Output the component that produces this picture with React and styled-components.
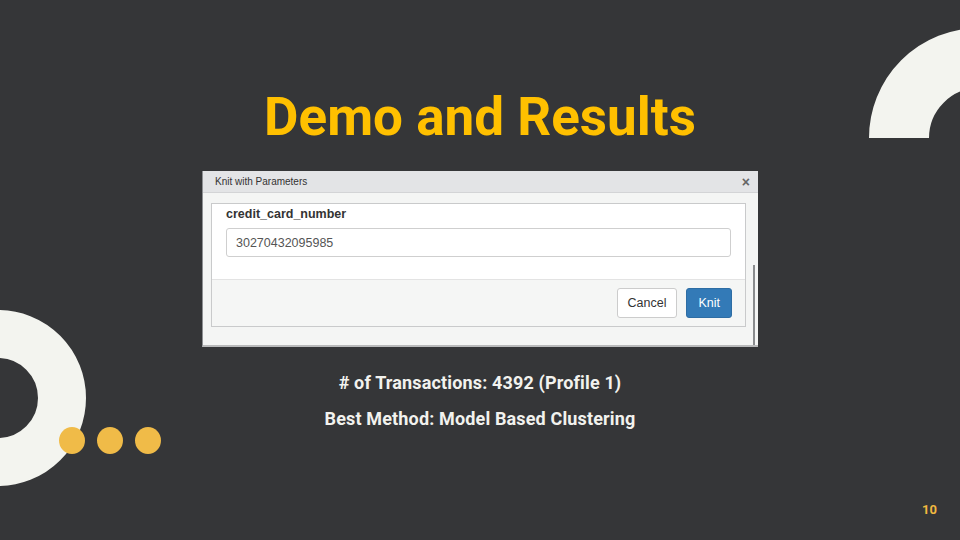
import React from 'react';
import styled, { createGlobalStyle } from 'styled-components';

const GlobalStyle = createGlobalStyle`
  html, body {
    margin: 0;
    padding: 0;
    background: #353638;
  }
  * { box-sizing: border-box; }
`;

const Slide = styled.div`
  position: relative;
  width: 960px;
  height: 540px;
  overflow: hidden;
  background: #353638;
  display: flex;
  flex-direction: column;
  align-items: center;
  font-family: 'Roboto', 'Liberation Sans', sans-serif;
`;

const Title = styled.h1`
  margin: 82px 0 0;
  font-family: 'Roboto', sans-serif;
  font-weight: 700;
  font-size: 53px;
  line-height: 70px;
  color: #ffc000;
`;

const Ring = styled.div`
  position: absolute;
  border-radius: 50%;
  border: ${p => p.$thick}px solid #f3f4ef;
  width: ${p => p.$size}px;
  height: ${p => p.$size}px;
  left: ${p => p.$x}px;
  top: ${p => p.$y}px;
`;

// keeps only the upper half of the top-right ring
const ArcClip = styled.div`
  position: absolute;
  left: 860px;
  top: 0;
  width: 100px;
  height: 138px;
  overflow: hidden;
`;

const Dots = styled.div`
  position: absolute;
  left: 59px;
  top: 427px;
  display: flex;
  gap: 12px;
`;

const Dot = styled.span`
  width: 26px;
  height: 27px;
  border-radius: 50%;
  background: #f0bb48;
`;

const Shot = styled.div`
  position: relative;
  margin-top: 19px;
  width: 556px;
  height: 176px;
  background: #f4f5f4;
  border-left: 1px solid #8d8f92;
  border-bottom: 2px solid #b9babb;
  font-family: 'Liberation Sans', Arial, sans-serif;
`;

const ShotHeader = styled.div`
  height: 22px;
  background: #e3e4e6;
  border-bottom: 1px solid #d3d4d6;
  display: flex;
  align-items: center;
  justify-content: space-between;
  padding: 0 8px 0 12px;
  font-size: 10px;
  color: #333;
`;

const Close = styled.span`
  font-size: 14px;
  color: #666;
  font-weight: 700;
`;

const Panel = styled.div`
  margin: 10px 0 0 8px;
  width: 535px;
  border: 1px solid #c9cacb;
  background: #ffffff;
`;

const PanelBody = styled.div`
  padding: 3px 14px 22px 14px;
`;

const Label = styled.div`
  font-weight: 700;
  font-size: 12.5px;
  color: #333;
  margin-bottom: 7px;
`;

const Input = styled.div`
  height: 29px;
  border: 1px solid #cfcfcf;
  border-radius: 3px;
  padding: 0 9px;
  display: flex;
  align-items: center;
  font-size: 12.5px;
  color: #555;
`;

const PanelFooter = styled.div`
  border-top: 1px solid #e3e3e3;
  background: #f5f6f5;
  padding: 8px 13px 8px;
  display: flex;
  justify-content: flex-end;
  gap: 9px;
`;

const Button = styled.div`
  height: 30px;
  padding: 0 ${p => (p.$primary ? 11 : 10)}px;
  border-radius: 3px;
  display: flex;
  align-items: center;
  font-size: 12.5px;
  color: ${p => (p.$primary ? '#fff' : '#333')};
  background: ${p => (p.$primary ? '#337ab7' : '#fff')};
  border: 1px solid ${p => (p.$primary ? '#2e6da4' : '#cccccc')};
`;

const ScrollEdge = styled.div`
  position: absolute;
  right: 3px;
  top: 94px;
  width: 2px;
  height: 80px;
  background: #8a8c8e;
`;

const Facts = styled.div`
  margin-top: 24px;
  display: flex;
  flex-direction: column;
  align-items: center;
  gap: 12px;
`;

const Fact = styled.p`
  margin: 0;
  font-family: 'Roboto', sans-serif;
  font-weight: 700;
  font-size: 18px;
  line-height: 24px;
  letter-spacing: 0.15px;
  color: #f2f2ee;
`;

const PageNumber = styled.div`
  position: absolute;
  right: 23px;
  bottom: 23px;
  font-family: 'Roboto', sans-serif;
  font-weight: 700;
  font-size: 13px;
  color: #f0b840;
`;

export default function App() {
  return (
    <>
      <GlobalStyle />
      <Slide>
        <ArcClip>
          <Ring $size={220} $thick={60} $x={9} $y={28} />
        </ArcClip>
        <Ring $size={176} $thick={48} $x={-90} $y={310} />
        <Dots>
          <Dot />
          <Dot />
          <Dot />
        </Dots>

        <Title>Demo and Results</Title>

        <Shot>
          <ShotHeader>
            <span>Knit with Parameters</span>
            <Close>×</Close>
          </ShotHeader>
          <Panel>
            <PanelBody>
              <Label>credit_card_number</Label>
              <Input>30270432095985</Input>
            </PanelBody>
            <PanelFooter>
              <Button>Cancel</Button>
              <Button $primary>Knit</Button>
            </PanelFooter>
          </Panel>
          <ScrollEdge />
        </Shot>

        <Facts>
          <Fact># of Transactions: 4392 (Profile 1)</Fact>
          <Fact>Best Method: Model Based Clustering</Fact>
        </Facts>

        <PageNumber>10</PageNumber>
      </Slide>
    </>
  );
}
